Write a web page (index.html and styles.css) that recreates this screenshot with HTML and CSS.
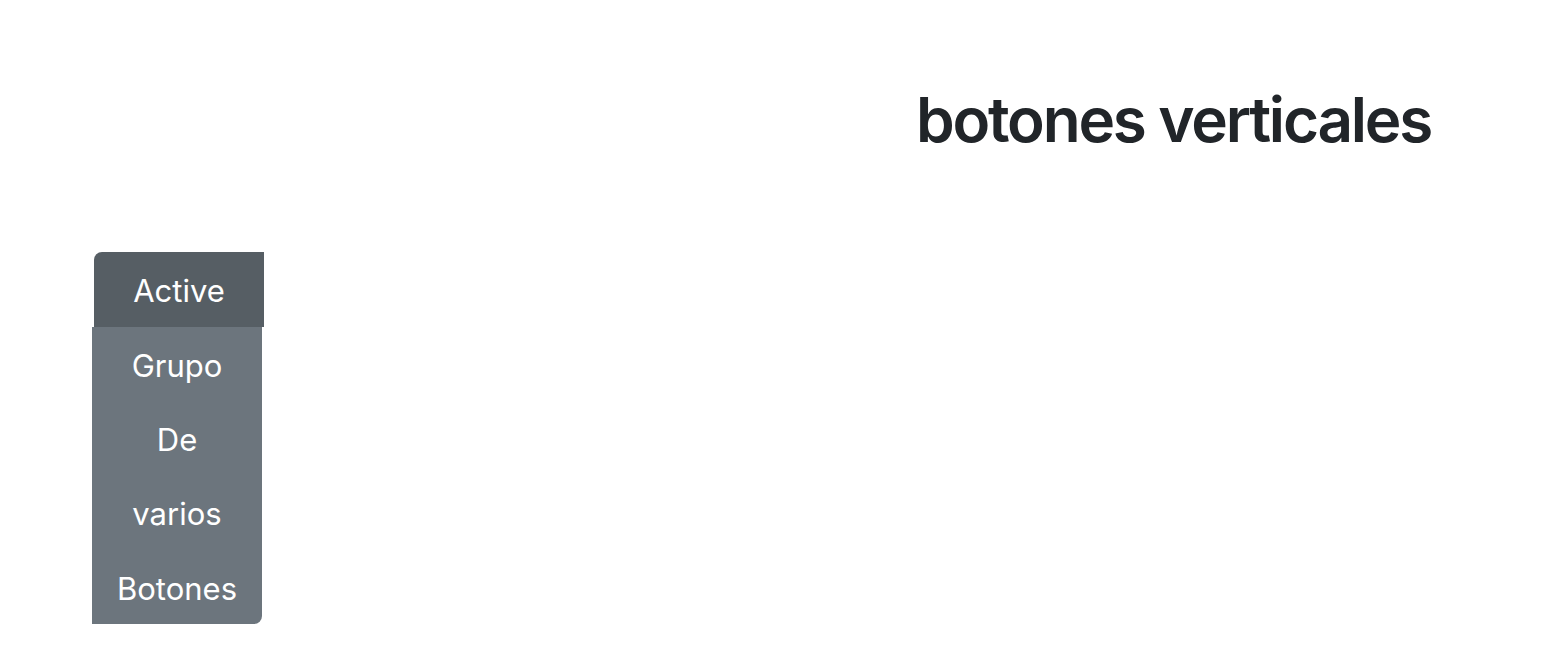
FILE: index.html
```html
<!DOCTYPE html>
<html lang="es">
<head>
<meta charset="utf-8">
<title>botones verticales</title>
<link rel="stylesheet" href="styles.css">
</head>
<body>
<header class="title-row">
  <h1 class="title">botones verticales</h1>
</header>
<div class="btn-group-vertical">
  <button class="btn btn-active">Active</button>
  <button class="btn">Grupo</button>
  <button class="btn">De</button>
  <button class="btn">varios</button>
  <button class="btn btn-last">Botones</button>
</div>
</body>
</html>
```
FILE: styles.css
```css
* { box-sizing: border-box; }
html, body { margin: 0; padding: 0; background: #fff; }
body {
  font-family: Inter, "Liberation Sans", sans-serif;
  color: #212529;
}
.title-row {
  padding: 83px 0 0 916px;
  height: 252px;
}
.title {
  margin: 0;
  font-size: 62px;
  font-weight: 600;
  line-height: 1.2;
  letter-spacing: -2.2px;
}
.btn-group-vertical {
  display: flex;
  flex-direction: column;
  width: 170px;
  margin-left: 92px;
}
.btn {
  height: 74.3px;
  border: 0;
  background: #6c757d;
  color: #fff;
  font-family: Inter, "Liberation Sans", sans-serif;
  font-size: 31px;
  font-weight: 400;
  padding: 2px 0 0;
  border-radius: 0;
}
.btn-active {
  height: 75px;
  background: #565e64;
  transform: translateX(2px);
  border-top-left-radius: 8px;
}
.btn-last {
  border-bottom-right-radius: 8px;
}
```
